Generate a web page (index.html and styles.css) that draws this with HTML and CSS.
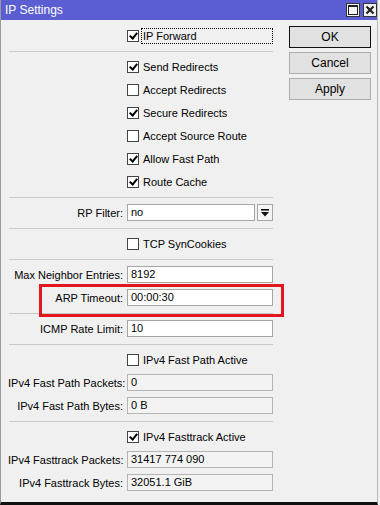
FILE: index.html
```html
<!DOCTYPE html>
<html lang="en">
<head>
    <meta charset="UTF-8">
    <meta name="viewport" content="width=device-width, initial-scale=1.0">
    <title>IP Settings</title>
    <link rel="stylesheet" href="styles.css">
</head>
<body>
<div class="window">
    <div class="titlebar">
        <span class="title">IP Settings</span>
        <div class="title-btns">
            <span class="tbtn">
                <svg width="12" height="12" viewBox="0 0 12 12"><rect x="1.5" y="1.5" width="9" height="9" fill="none" stroke="#222" stroke-width="1"/><rect x="1.5" y="1.5" width="9" height="1.5" fill="#222"/></svg>
            </span>
            <span class="tbtn">
                <svg width="12" height="12" viewBox="0 0 12 12"><path d="M2.5 2.5 L9.5 9.5 M9.5 2.5 L2.5 9.5" stroke="#222" stroke-width="2.2"/></svg>
            </span>
        </div>
    </div>

    <div class="content">
        <div class="form">
            <div class="section">
                <div class="row"><span></span><label class="check"><span class="box on"></span><span class="focus">IP Forward</span></label></div>
            </div>
            <div class="sep"></div>
            <div class="section">
                <div class="row"><span></span><label class="check"><span class="box on"></span>Send Redirects</label></div>
                <div class="row"><span></span><label class="check"><span class="box"></span>Accept Redirects</label></div>
                <div class="row"><span></span><label class="check"><span class="box on"></span>Secure Redirects</label></div>
                <div class="row"><span></span><label class="check"><span class="box"></span>Accept Source Route</label></div>
                <div class="row"><span></span><label class="check"><span class="box on"></span>Allow Fast Path</label></div>
                <div class="row"><span></span><label class="check"><span class="box on"></span>Route Cache</label></div>
            </div>
            <div class="sep"></div>
            <div class="section">
                <div class="row">
                    <span class="lbl">RP Filter:</span>
                    <div class="combo">
                        <span class="field">no</span>
                        <span class="drop">
                            <svg width="10" height="10" viewBox="0 0 10 10"><rect x="1" y="1" width="8" height="1.6" fill="#111"/><path d="M1 4 H9 L5 8.5 Z" fill="#111"/></svg>
                        </span>
                    </div>
                </div>
            </div>
            <div class="sep"></div>
            <div class="section">
                <div class="row"><span></span><label class="check"><span class="box"></span>TCP SynCookies</label></div>
            </div>
            <div class="sep"></div>
            <div class="section">
                <div class="row"><span class="lbl">Max Neighbor Entries:</span><span class="field">8192</span></div>
                <div class="row"><span class="lbl">ARP Timeout:</span><span class="field">00:00:30</span></div>
            </div>
            <div class="sep"></div>
            <div class="section">
                <div class="row"><span class="lbl">ICMP Rate Limit:</span><span class="field">10</span></div>
            </div>
            <div class="sep"></div>
            <div class="section">
                <div class="row"><span></span><label class="check"><span class="box"></span>IPv4 Fast Path Active</label></div>
                <div class="row"><span class="lbl">IPv4 Fast Path Packets:</span><span class="field ro">0</span></div>
                <div class="row"><span class="lbl">IPv4 Fast Path Bytes:</span><span class="field ro">0 B</span></div>
            </div>
            <div class="sep"></div>
            <div class="section">
                <div class="row"><span></span><label class="check"><span class="box on"></span>IPv4 Fasttrack Active</label></div>
                <div class="row"><span class="lbl">IPv4 Fasttrack Packets:</span><span class="field ro">31417 774 090</span></div>
                <div class="row"><span class="lbl">IPv4 Fasttrack Bytes:</span><span class="field ro">32051.1 GiB</span></div>
            </div>
        </div>

        <div class="buttons">
            <button class="btn default">OK</button>
            <button class="btn">Cancel</button>
            <button class="btn">Apply</button>
        </div>
    </div>

    <!-- red highlight drawn over the ARP Timeout row -->
    <div class="highlight"></div>
</div>
</body>
</html>
```

FILE: styles.css
```css
body {
    margin: 0;
    background-color: #f0f0f0;
    font-family: "Liberation Sans", Arial, sans-serif;
    font-size: 11px;
    color: #000;
}

/* Window frame */
.window {
    position: relative;
    width: 378px;
    height: 505px;
    box-sizing: border-box;
    background-color: #f0f0f0;
    border-left: 1px solid #9a9a9a;
    border-right: 1px solid #b8b8b8;
    border-bottom: 3px solid #111;
    overflow: hidden;
}

/* Title bar */
.titlebar {
    height: 20px;
    background-color: #5b5ed2;
    color: #fff;
    display: flex;
    align-items: center;
    justify-content: space-between;
    padding: 0 0 0 4px;
}

.title {
    font-size: 12px;
}

.title-btns {
    display: flex;
    gap: 3px;
}

.tbtn {
    width: 14px;
    height: 14px;
    background-color: #f2f2f2;
    border: 1px solid #333;
    box-sizing: border-box;
    display: flex;
    align-items: center;
    justify-content: center;
}

/* Main content */
.content {
    display: flex;
    gap: 16px;
    padding: 4px 0 0 7px;
}

.form {
    width: 265px;
}

.row {
    display: grid;
    grid-template-columns: 115px 146px;
    column-gap: 4px;
    height: 23px;
    align-items: center;
}

.lbl {
    text-align: right;
    white-space: nowrap;
}

/* Separator lines */
.sep {
    height: 1px;
    background-color: #c8c8c8;
    margin: 4px 0 3px 1px;
}

/* Checkboxes */
.check {
    display: flex;
    align-items: center;
    gap: 4px;
}

.box {
    width: 12px;
    height: 12px;
    box-sizing: border-box;
    border: 1px solid #444;
    background-color: #fff;
    position: relative;
    flex: none;
}

.box.on::after {
    content: "";
    position: absolute;
    left: 3px;
    top: 0px;
    width: 3px;
    height: 6px;
    border-right: 2px solid #000;
    border-bottom: 2px solid #000;
    transform: rotate(40deg);
}

.focus {
    flex: 1;
    border: 1px dotted #000;
    padding: 1px 0 1px 1px;
    margin-left: -2px;
}

/* Text fields */
.field {
    display: block;
    height: 17px;
    line-height: 15px;
    box-sizing: border-box;
    border: 1px solid #a6a6a6;
    background-color: #fff;
    padding-left: 3px;
}

.field.ro {
    background-color: #f3f3f3;
    border-color: #b4b4b4;
}

.combo {
    display: flex;
    gap: 2px;
}

.combo .field {
    flex: 1;
}

.drop {
    width: 16px;
    height: 17px;
    box-sizing: border-box;
    border: 1px solid #a6a6a6;
    background-color: #f5f5f5;
    display: flex;
    align-items: center;
    justify-content: center;
}

/* Buttons */
.buttons {
    display: flex;
    flex-direction: column;
    gap: 4px;
    padding-top: 2px;
}

.btn {
    width: 82px;
    height: 22px;
    font-family: "Liberation Sans", Arial, sans-serif;
    font-size: 12px;
    background-color: #e1e1e1;
    border: 1px solid #adadad;
    color: #000;
    padding: 0;
}

.btn.default {
    border: 1px solid #111;
    box-shadow: inset 0 0 0 1px #e1e1e1;
}

/* Red annotation box */
.highlight {
    position: absolute;
    left: 38px;
    top: 284px;
    width: 245px;
    height: 33px;
    border: 3px solid #e2161c;
    box-sizing: border-box;
}
```
